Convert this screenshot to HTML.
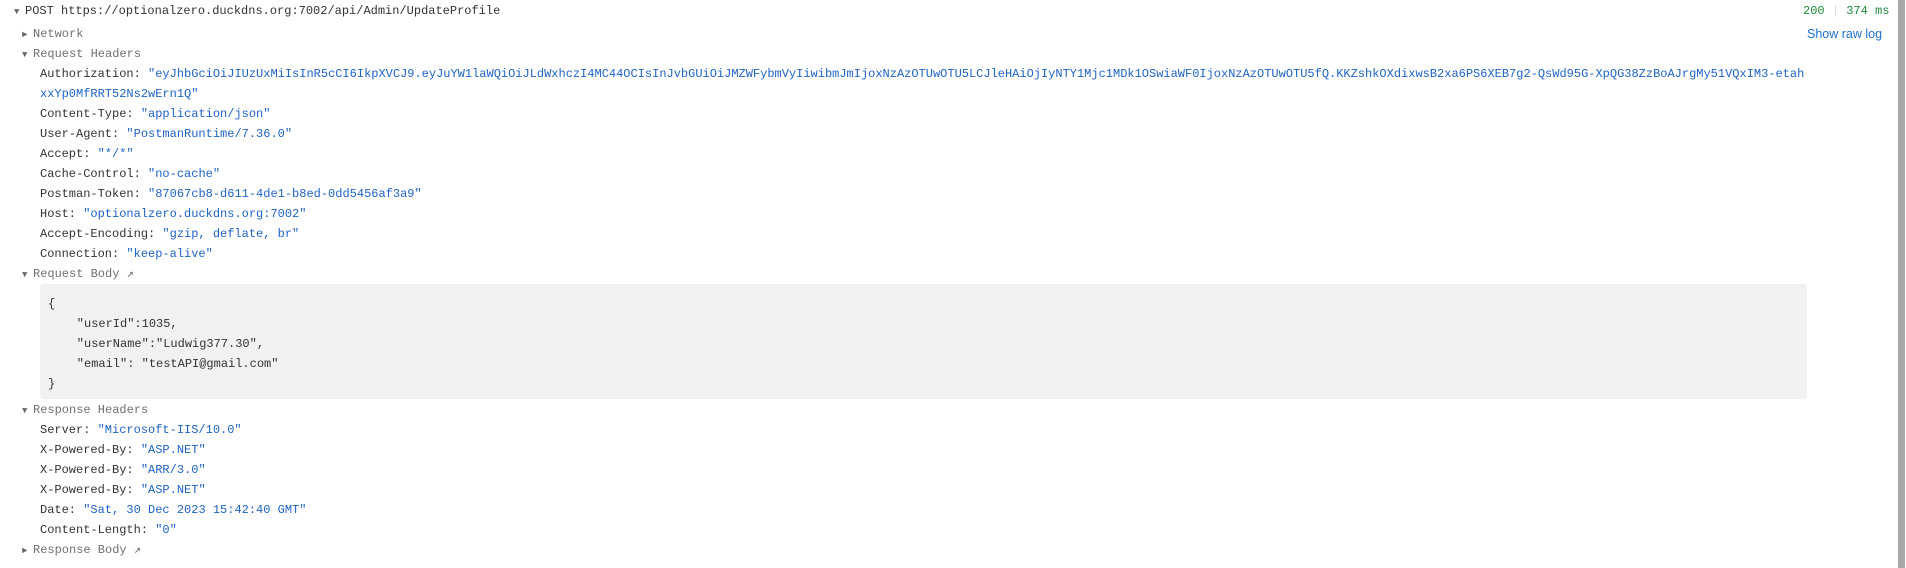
<!DOCTYPE html>
<html><head><meta charset="utf-8"><style>
html,body{margin:0;padding:0;background:#fff;width:1906px;height:568px;overflow:hidden}
body{font-family:"Liberation Mono",monospace;font-size:12px;color:#333;position:relative}
.l{position:absolute;white-space:pre;line-height:20px;height:20px}
.h{color:#707070}
.v{color:#1f63c6}
.t{font-size:9px;color:#666;display:inline-block;width:11px}
.box{position:absolute;left:40px;top:284px;width:1767px;height:115px;background:#f1f1f1;border-radius:4px}
.sb{position:absolute;left:1898px;top:0;width:7px;height:568px;background:#a8a8a8}
</style></head><body>
<div class="l" style="left:14px;top:1px"><span class="t">▼</span>POST https://optionalzero.duckdns.org:7002/api/Admin/UpdateProfile</div>
<div class="l" style="left:1803px;top:1px;color:#1e8a3a">200 <span style="color:#ddd">|</span> 374 ms</div>
<div class="l" style="left:1807px;top:24px;font-family:'Liberation Sans',sans-serif;color:#1f6fd0;font-size:12.5px">Show raw log</div>
<div class="l h" style="left:22px;top:24px"><span class="t">►</span>Network</div>
<div class="l h" style="left:22px;top:44px"><span class="t">▼</span>Request Headers</div>
<div class="l" style="left:40px;top:64px">Authorization: <span class="v">"eyJhbGciOiJIUzUxMiIsInR5cCI6IkpXVCJ9.eyJuYW1laWQiOiJLdWxhczI4MC44OCIsInJvbGUiOiJMZWFybmVyIiwibmJmIjoxNzAzOTUwOTU5LCJleHAiOjIyNTY1Mjc1MDk1OSwiaWF0IjoxNzAzOTUwOTU5fQ.KKZshkOXdixwsB2xa6PS6XEB7g2-QsWd95G-XpQG38ZzBoAJrgMy51VQxIM3-etah</span></div>
<div class="l v" style="left:40px;top:84px">xxYp0MfRRT52Ns2wErn1Q"</div>
<div class="l" style="left:40px;top:104px">Content-Type: <span class="v">"application/json"</span></div>
<div class="l" style="left:40px;top:124px">User-Agent: <span class="v">"PostmanRuntime/7.36.0"</span></div>
<div class="l" style="left:40px;top:144px">Accept: <span class="v">"*/*"</span></div>
<div class="l" style="left:40px;top:164px">Cache-Control: <span class="v">"no-cache"</span></div>
<div class="l" style="left:40px;top:184px">Postman-Token: <span class="v">"87067cb8-d611-4de1-b8ed-0dd5456af3a9"</span></div>
<div class="l" style="left:40px;top:204px">Host: <span class="v">"optionalzero.duckdns.org:7002"</span></div>
<div class="l" style="left:40px;top:224px">Accept-Encoding: <span class="v">"gzip, deflate, br"</span></div>
<div class="l" style="left:40px;top:244px">Connection: <span class="v">"keep-alive"</span></div>
<div class="l h" style="left:22px;top:264px"><span class="t">▼</span>Request Body ↗</div>
<div class="box"></div>
<div class="l" style="left:48px;top:294px">{</div>
<div class="l" style="left:48px;top:314px">    "userId":1035,</div>
<div class="l" style="left:48px;top:334px">    "userName":"Ludwig377.30",</div>
<div class="l" style="left:48px;top:354px">    "email": "testAPI@gmail.com"</div>
<div class="l" style="left:48px;top:374px">}</div>
<div class="l h" style="left:22px;top:400px"><span class="t">▼</span>Response Headers</div>
<div class="l" style="left:40px;top:420px">Server: <span class="v">"Microsoft-IIS/10.0"</span></div>
<div class="l" style="left:40px;top:440px">X-Powered-By: <span class="v">"ASP.NET"</span></div>
<div class="l" style="left:40px;top:460px">X-Powered-By: <span class="v">"ARR/3.0"</span></div>
<div class="l" style="left:40px;top:480px">X-Powered-By: <span class="v">"ASP.NET"</span></div>
<div class="l" style="left:40px;top:500px">Date: <span class="v">"Sat, 30 Dec 2023 15:42:40 GMT"</span></div>
<div class="l" style="left:40px;top:520px">Content-Length: <span class="v">"0"</span></div>
<div class="l h" style="left:22px;top:540px"><span class="t">►</span>Response Body ↗</div>
<div class="sb"></div>
</body></html>
